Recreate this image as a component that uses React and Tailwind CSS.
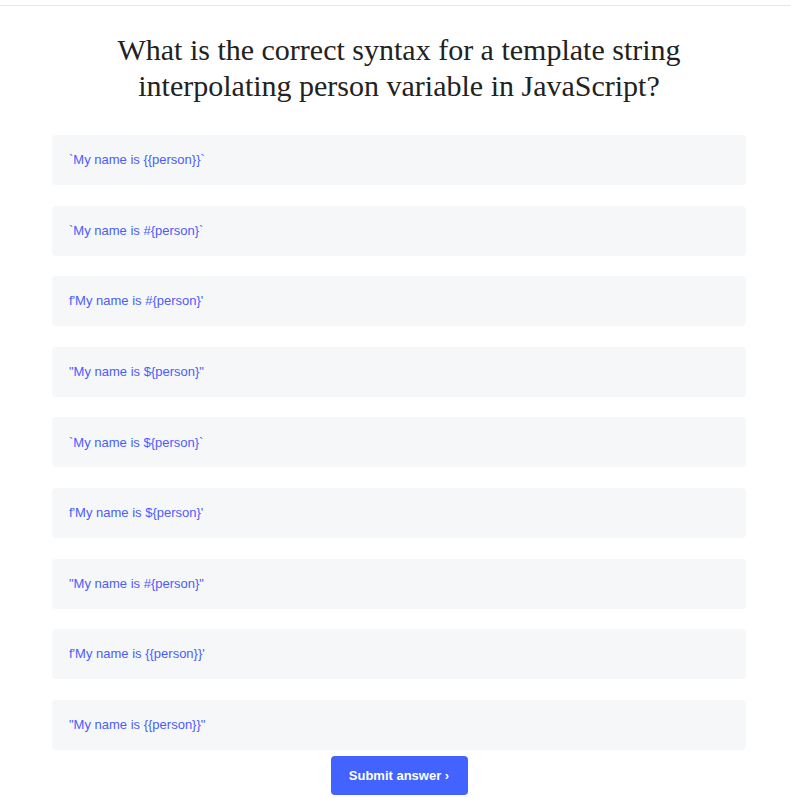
const options = [
  '`My name is {{person}}`',
  '`My name is #{person}`',
  "f'My name is #{person}'",
  '"My name is ${person}"',
  '`My name is ${person}`',
  "f'My name is ${person}'",
  '"My name is #{person}"',
  "f'My name is {{person}}'",
  '"My name is {{person}}"',
];

const App = () => {
  return (
    <div className="min-h-screen bg-white font-['Liberation_Sans',Arial,sans-serif]">
      <div className="h-[5px]" />
      <div className="border-t border-[#e5e7eb]" />
      <div className="ml-[52px] w-[694px] pt-[26px]">
        <h1 className="text-center font-['Liberation_Serif',Georgia,serif] text-[30px] leading-[36px] text-[#222]">
          What is the correct syntax for a template string
          <br />
          interpolating person variable in JavaScript?
        </h1>
        <div className="mt-[31px] flex flex-col gap-[20.6px]">
          {options.map((o) => (
            <div
              key={o}
              className="h-[50px] rounded-[4px] bg-[#f6f7f9] px-[17px] flex items-center text-[13px] text-[#4b5cff]"
            >
              {o}
            </div>
          ))}
        </div>
        <div className="flex justify-center mt-[6px]">
          <button className="w-[137px] h-[39px] rounded-[4px] bg-[#4263ff] text-white text-[13px] font-bold">
            Submit answer ›
          </button>
        </div>
      </div>
    </div>
  );
};

export default App;
